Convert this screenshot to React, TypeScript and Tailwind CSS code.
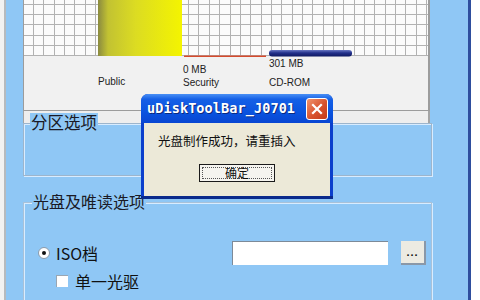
const cjk = "font-['Noto_Sans_CJK_SC','Noto_Sans',sans-serif]";

function ChartGrid() {
  const cols = Array.from({ length: 40 }, (_, i) => -1 + (i + 1) * 10.35);
  const rows = Array.from({ length: 6 }, (_, i) => 4.5 + i * 10.2);
  return (
    <svg width="404" height="57" className="block">
      <defs>
        <linearGradient id="yel" x1="0" x2="1" y1="0" y2="0">
          <stop offset="0" stopColor="#8a8a40" />
          <stop offset="0.12" stopColor="#c2c232" />
          <stop offset="0.45" stopColor="#dcdc22" />
          <stop offset="1" stopColor="#f4f400" />
        </linearGradient>
        <linearGradient id="nav" x1="0" x2="0" y1="0" y2="1">
          <stop offset="0" stopColor="#6a78c4" />
          <stop offset="0.45" stopColor="#22308a" />
          <stop offset="1" stopColor="#0e1862" />
        </linearGradient>
      </defs>
      <rect x="0" y="0" width="404" height="56" fill="#fbfbfb" />
      {cols.map((x) => (
        <line key={"c" + x} x1={x} x2={x} y1="0" y2="56" stroke="#b2b2b2" strokeWidth="1" shapeRendering="crispEdges" />
      ))}
      {rows.map((y) => (
        <line key={"r" + y} x1="0" x2="404" y1={y} y2={y} stroke="#b2b2b2" strokeWidth="1" shapeRendering="crispEdges" />
      ))}
      <rect x="74" y="0" width="84" height="56" fill="url(#yel)" />
      <rect x="160" y="55.5" width="82" height="1.5" fill="#d64a2c" />
      <rect x="245" y="50" width="83" height="6.5" rx="3" fill="url(#nav)" />
    </svg>
  );
}

function Dialog() {
  return (
    <div className="absolute left-[135px] top-[94px] flex h-[105px] w-[192px] flex-col overflow-hidden rounded-t-[7px] border-b-[3px] border-[#0a2a8c] bg-[#0b3fcc]">
      <div className="flex h-[29px] shrink-0 items-center bg-[linear-gradient(to_bottom,#4a90f5_0%,#1560e6_18%,#0a54e0_60%,#0846d2_100%)] pl-[6px] pr-[5px]">
        <span className="font-['DejaVu_Sans_Mono',monospace] text-[13.5px] font-bold leading-none tracking-[0.1px] text-white [text-shadow:1px_1px_0_#0a2a80]">
          uDiskToolBar_J0701
        </span>
        <div className="ml-auto flex h-[22px] w-[22px] items-center justify-center rounded-[3px] border border-white bg-[linear-gradient(135deg,#f0936c,#d8522e_55%,#c23a1a)]">
          <svg width="12" height="12" viewBox="0 0 12 12">
            <path d="M2 2 L10 10 M10 2 L2 10" stroke="white" strokeWidth="2.2" strokeLinecap="square" />
          </svg>
        </div>
      </div>
      <div className="mx-[3px] flex flex-1 flex-col bg-[#ece9d8]">
        <div className={`mt-[10px] pl-[14px] text-[12.5px] leading-[16px] text-[#111] ${cjk}`}>光盘制作成功，请重插入</div>
        <div className="mx-auto mt-[15px] flex h-[18px] w-[76px] items-center justify-center border border-[#1a1a1a] bg-[#f5f4ef] p-[2px]">
          <div className={`flex h-full w-full items-center justify-center border border-dotted border-[#555] text-[12px] leading-none text-[#111] ${cjk}`}>
            确定
          </div>
        </div>
      </div>
    </div>
  );
}

export default function App() {
  return (
    <div className="flex h-[300px] w-[480px] overflow-hidden bg-white font-['Liberation_Sans',sans-serif]">
      <div className="w-[4px] bg-[#f2f2f2]" />
      <div className="w-[2px] bg-[#b6babe]" />
      <div className="relative flex flex-1 flex-col bg-[#8fc7f5] pl-[17px] pr-[36px]">
        {/* chart panel */}
        <div className="mr-[2px] flex h-[111px] shrink-0 flex-col border-b border-l border-r-2 border-[#9c9c9c] bg-[#f1f1f1]">
          <ChartGrid />
          <div className="flex pl-[74px] text-[10px] leading-[12px] text-[#222]">
            <div className="w-[85px] pt-[19px]">Public</div>
            <div className="w-[86px] pt-[7px]">
              <div>0 MB</div>
              <div className="mt-[1px]">Security</div>
            </div>
            <div className="pt-[1px]">
              <div>301 MB</div>
              <div className="mt-[7px]">CD-ROM</div>
            </div>
          </div>
        </div>
        <div className="mr-[2px] h-[12px] shrink-0 border-l border-r-2 border-[#a4a4a4] bg-[#eeeeee]" />

        {/* 分区选项 */}
        <div className="relative h-[53px] shrink-0 border border-[#9db5cc] shadow-[inset_1px_1px_0_#d8ecff,1px_1px_0_#d8ecff]">
          <span className={`absolute left-[6px] top-[-11px] bg-[#8fc7f5] px-[1px] text-[16.5px] leading-[18px] text-[#1a1a26] ${cjk}`}>
            分区选项
          </span>
        </div>

        {/* 光盘及唯读选项 */}
        <div className="relative mt-[26px] flex flex-1 flex-col border-l border-r border-t border-[#a9c1d8] shadow-[inset_1px_1px_0_#d8ecff,1px_1px_0_#d8ecff] pl-[14px] pr-[5px] pt-[38px]">
          <span className={`absolute left-[8px] top-[-11px] bg-[#8fc7f5] px-[1px] text-[16px] leading-[18px] text-[#1a1a26] ${cjk}`}>
            光盘及唯读选项
          </span>
          <div className="flex h-[24px] items-center">
            <div className="flex h-[12px] w-[12px] items-center justify-center rounded-full border border-[#8a9aaa] bg-white">
              <div className="h-[4px] w-[4px] rounded-full bg-[#111]" />
            </div>
            <span className={`ml-[6px] text-[16px] leading-[18px] text-[#111] ${cjk}`}>ISO档</span>
            <div className="ml-auto h-[24px] w-[156px] border-l border-t border-[#7d8a98] bg-white" />
            <div className="ml-[13px] flex h-[24px] w-[25px] items-center justify-center border-b-2 border-r-2 border-b-[#8a98a8] border-r-[#8a98a8] bg-[#ecebe2] text-[11px] font-bold leading-none tracking-[1px] text-[#111]">
              ...
            </div>
          </div>
          <div className="mt-[6px] flex h-[20px] items-center pl-[18px]">
            <div className="h-[12px] w-[12px] border-l border-t border-[#9aa6b2] bg-white" />
            <span className={`ml-[7px] text-[16px] leading-[18px] text-[#111] ${cjk}`}>单一光驱</span>
          </div>
        </div>

        <Dialog />
      </div>
      <div className="w-[3px] bg-[#2e4e9e]" />
      <div className="w-[9px] bg-white" />
    </div>
  );
}
